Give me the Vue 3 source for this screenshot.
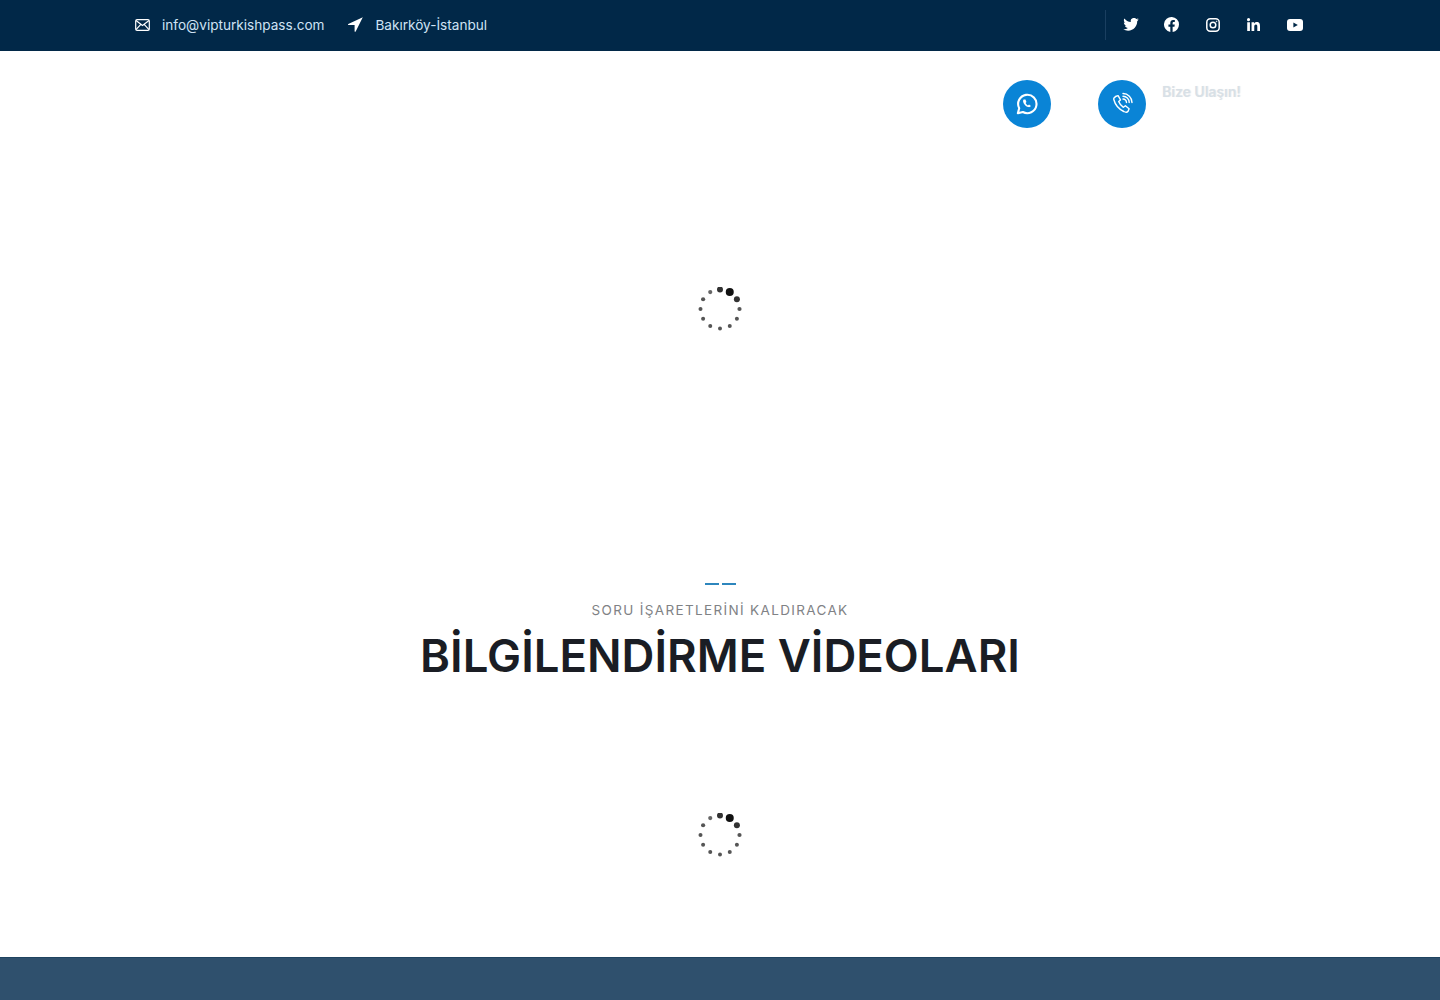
<template>
  <div class="page">
    <!-- Top contact bar -->
    <div class="topbar">
      <div class="topbar__left">
        <a class="topbar__item topbar__item--mail">
          <svg width="15" height="12" viewBox="0 0 15 12" fill="none" stroke="#fff" stroke-width="1.2">
            <rect x="0.7" y="0.7" width="13.6" height="10.6" rx="1.4" />
            <path d="M1 1.6l6.5 5 6.5-5M1 10.6l4.6-5M14 10.6l-4.6-5" />
          </svg>
          <span>info@vipturkishpass.com</span>
        </a>
        <a class="topbar__item">
          <svg width="15" height="15" viewBox="0 0 15 15" fill="#fff">
            <path d="M14.8.2L.3 7c-.5.300-.3 1.100.2 1.100h6.100v6.100c0 .6.800.8 1.100.2L14.800.2z" />
          </svg>
          <span>Bakırköy-İstanbul</span>
        </a>
      </div>
      <div class="topbar__social">
        <a class="social">
          <svg width="16" height="13" viewBox="0 0 24 20" fill="#fff">
            <path d="M24 2.4c-.9.4-1.8.7-2.8.8 1-.6 1.8-1.6 2.2-2.7-1 .6-2 1-3.100 1.200A4.900 4.900 0 0 0 11.800 6.200C7.700 6 4.100 4 1.700.9c-1.300 2.200-.6 5.100 1.500 6.600-.8 0-1.600-.2-2.200-.6 0 2.300 1.600 4.400 3.900 4.900-.7.200-1.500.2-2.200.1.600 2 2.400 3.400 4.600 3.400A9.900 9.900 0 0 1 0 17.300 14 14 0 0 0 7.500 19.500c9.100 0 14.300-7.700 14-14.600 1-.7 1.800-1.600 2.500-2.500z" />
          </svg>
        </a>
        <a class="social">
          <svg width="15" height="15" viewBox="0 0 24 24" fill="#fff">
            <path d="M24 12a12 12 0 1 0-13.900 11.900v-8.400H7.100V12h3V9.400c0-3 1.800-4.700 4.500-4.700 1.300 0 2.700.2 2.700.2v3h-1.500c-1.500 0-2 .9-2 1.900V12h3.400l-.5 3.500h-2.900v8.400A12 12 0 0 0 24 12z" />
          </svg>
        </a>
        <a class="social">
          <svg width="14" height="14" viewBox="0 0 14 14" fill="none" stroke="#fff" stroke-width="1.5">
            <rect x="0.8" y="0.8" width="12.400" height="12.400" rx="3.500" />
            <circle cx="7" cy="7" r="2.800" />
            <circle cx="10.600" cy="3.400" r="0.400" fill="#fff" stroke-width="0.8" />
          </svg>
        </a>
        <a class="social">
          <svg width="13" height="13" viewBox="0 0 24 24" fill="#fff">
            <path d="M5.400 24H.4V8h5v16zM2.900 5.800a2.900 2.900 0 1 1 0-5.800 2.900 2.900 0 0 1 0 5.800zM24 24h-5v-7.800c0-1.900 0-4.300-2.600-4.300s-3 2-3 4.200V24h-5V8h4.800v2.200h.1c.7-1.300 2.300-2.600 4.700-2.600 5 0 6 3.300 6 7.600V24z" />
          </svg>
        </a>
        <a class="social">
          <svg width="16" height="12" viewBox="0 0 16 12">
            <rect width="16" height="12" rx="3" fill="#fff" />
            <path d="M6.400 3.400v5.200L10.800 6z" fill="#012848" />
          </svg>
        </a>
      </div>
    </div>

    <!-- Header with contact buttons, logo and menu not loaded yet -->
    <header class="header">
      <a class="round-btn round-btn--whatsapp">
        <svg width="22" height="22" viewBox="0 0 24 24" fill="none" stroke="#fff" stroke-width="2.300">
          <path d="M2 22l1.500-5.400A10 10 0 1 1 7.500 20.700L2 22z" stroke-linejoin="round" />
          <path d="M8.300 7.200c-.8.900-.9 2.200.2 4.200 1.200 2.200 3.200 3.600 5 4 1.300.2 2.200-.2 2.800-1.200l-2.100-1.600-1.200.9c-1-.4-1.900-1.300-2.500-2.600l.9-1.100-1.100-2.700H8.300z" fill="#fff" stroke="none" />
        </svg>
      </a>
      <a class="round-btn">
        <svg width="24" height="24" viewBox="0 0 24 24" fill="none" stroke="#fff" stroke-width="1.400" stroke-linecap="round">
          <path d="M5.500 4.500l2.600-.9 2.400 4.300-1.800 1.700c.8 2.200 2.600 4.400 4.700 5.700l2-1.500 3.700 3-1 2.400c-.8 1-2.600 1.200-4.300.3-5.100-2.500-8.700-7-10-12-.3-1.200.4-2.200 1.700-2.700z" stroke-linejoin="round" />
          <path d="M13 1.500a9 9 0 0 1 9 9M13 4.300a6.200 6.200 0 0 1 6.200 6.200M13 7a3.500 3.500 0 0 1 3.500 3.500" />
        </svg>
      </a>
      <span class="header__label">Bize Ulaşın!</span>
    </header>

    <!-- First loading block -->
    <div class="loader loader--first">
      <svg class="spinner" width="44" height="44" viewBox="0 0 44 44">
        <circle
          v-for="dot in dots"
          :key="dot.id"
          :cx="dot.x"
          :cy="dot.y"
          :r="dot.r"
          :fill="dot.color"
        />
      </svg>
    </div>

    <!-- Videos section -->
    <section class="videos">
      <div class="videos__dash"><i></i><i></i></div>
      <p class="videos__sub">SORU İŞARETLERİNİ KALDIRACAK</p>
      <h2 class="videos__title">BİLGİLENDİRME VİDEOLARI</h2>
      <div class="loader loader--second">
        <svg class="spinner" width="44" height="44" viewBox="0 0 44 44">
          <circle
            v-for="dot in dots"
            :key="dot.id"
            :cx="dot.x"
            :cy="dot.y"
            :r="dot.r"
            :fill="dot.color"
          />
        </svg>
      </div>
    </section>

    <footer class="footer"></footer>
  </div>
</template>

<script setup>
// Spinner frame: twelve dots round a circle, the one at 1 o'clock is the head
const sizes = [4, 3, 2.1, 2, 2, 2, 2, 2, 2, 2.1, 2.1, 3]
const colors = ['#111', '#333', '#555', '#555', '#555', '#555', '#555', '#555', '#555', '#555', '#666', '#333']

const dots = sizes.map((r, i) => {
  const angle = ((i - 2) * Math.PI) / 6
  return {
    id: i,
    x: +(22 + 19.5 * Math.cos(angle)).toFixed(2),
    y: +(22 + 19.5 * Math.sin(angle)).toFixed(2),
    r,
    color: colors[i],
  }
})
</script>

<style>
html,
body {
  margin: 0;
  background: #fff;
}
</style>

<style scoped>
.page {
  height: 1000px;
  overflow: hidden;
  display: flex;
  flex-direction: column;
  font-family: Inter, 'Noto Sans', sans-serif;
}

.topbar {
  height: 51px;
  flex: none;
  background: #012848;
  display: flex;
  align-items: center;
  justify-content: space-between;
  padding: 0 125px 2px 135px;
  box-sizing: border-box;
}

.topbar__left {
  display: flex;
  align-items: center;
  gap: 24px;
}

.topbar__item {
  display: flex;
  align-items: center;
  gap: 12px;
  color: #cfe3f5;
  font-size: 13.6px;
}

.topbar__social {
  display: flex;
  align-items: center;
  height: 30px;
  padding-left: 4px;
  border-left: 1px solid #1a3f60;
}

.social {
  width: 41px;
  display: flex;
  justify-content: center;
  align-items: center;
}

.header {
  height: 106px;
  flex: none;
  display: flex;
  align-items: flex-start;
  padding: 29px 0 0 1003px;
  box-sizing: border-box;
}

.round-btn {
  width: 48px;
  height: 48px;
  border-radius: 50%;
  background: #0a84d6;
  display: flex;
  align-items: center;
  justify-content: center;
  flex: none;
}

.round-btn--whatsapp {
  margin-right: 47px;
}

.header__label {
  margin: 3px 0 0 16px;
  font-size: 14px;
  font-weight: 600;
  color: #d8e0e6;
  text-shadow: 1px 0 1px #e8edf0;
}

.loader {
  display: flex;
  justify-content: center;
}

.loader--first {
  padding-top: 130px;
  height: 297px;
  flex: none;
  box-sizing: border-box;
}

.videos {
  flex: 1;
  text-align: center;
  padding-top: 129px;
}

.videos__dash {
  display: flex;
  justify-content: center;
  gap: 3px;
  margin-left: 1px;
}

.videos__dash i {
  width: 14px;
  height: 2px;
  background: #2d86bd;
}

.videos__sub {
  margin: 16px 0 0;
  font-size: 13.5px;
  letter-spacing: 1.35px;
  line-height: 18px;
  color: #808285;
}

.videos__title {
  margin: 9px 0 0;
  font-size: 45.5px;
  line-height: 56px;
  font-weight: 600;
  color: #1a1d24;
}

.loader--second {
  margin-top: 129px;
}

.footer {
  height: 43px;
  flex: none;
  background: #2f506d;
  border-top: 1px solid #1f4460;
  box-sizing: border-box;
}
</style>
